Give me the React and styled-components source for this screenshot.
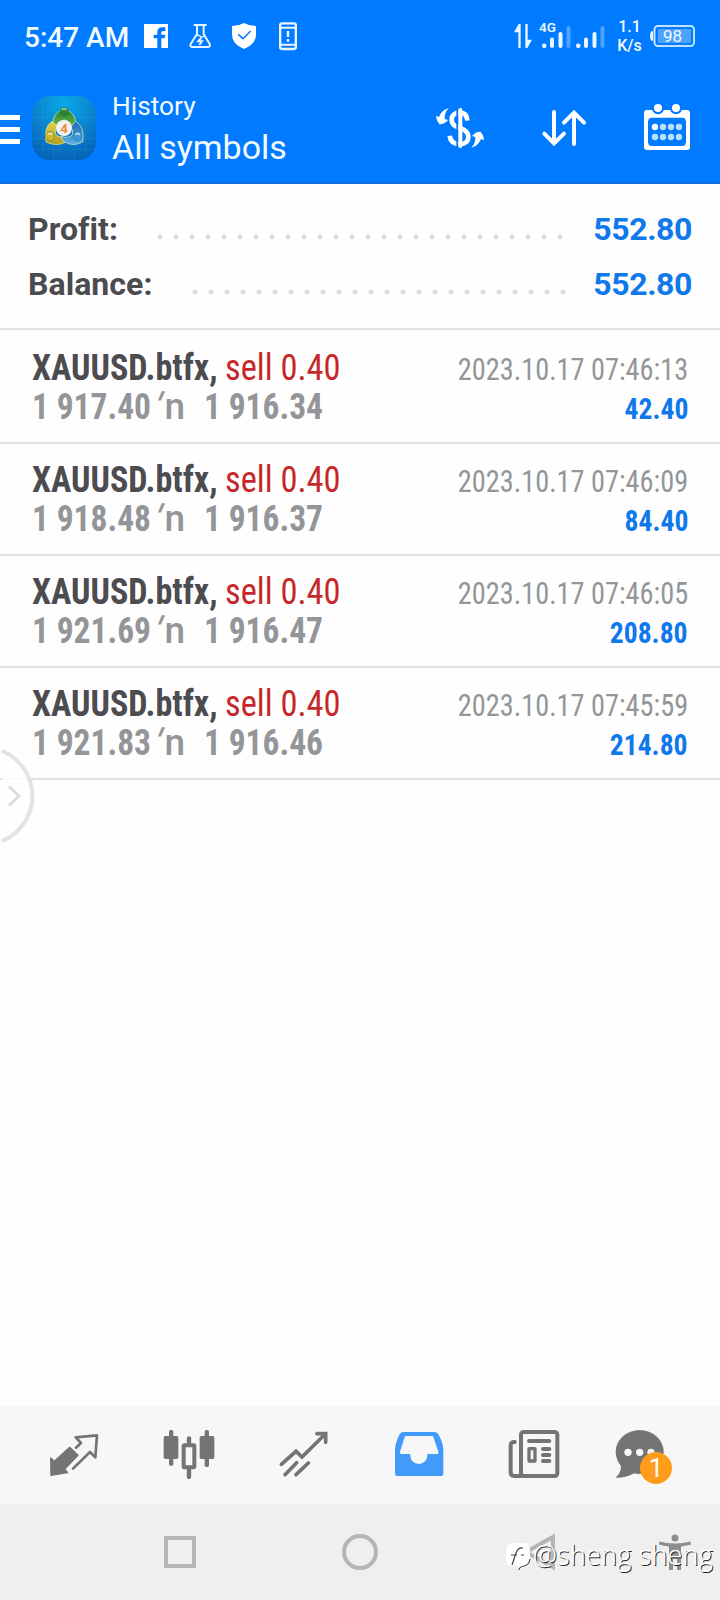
import styled, { createGlobalStyle } from 'styled-components';

const GlobalStyle = createGlobalStyle`
  body {
    margin: 0;
    background: #fefefe;
    font-family: Roboto, 'Noto Sans', sans-serif;
  }
  svg {
    display: block;
    flex: none;
    overflow: visible;
  }
`;

const Screen = styled.div`
  position: relative;
  display: flex;
  flex-direction: column;
  width: 720px;
  height: 1600px;
  overflow: hidden;
`;

/* status bar */

const StatusBar = styled.div`
  display: flex;
  align-items: center;
  justify-content: space-between;
  height: 72px;
  padding: 0 25px 0 24px;
  box-sizing: border-box;
  background: #007aff;
  color: #f4fbff;
`;

const StatusGroup = styled.div`
  display: flex;
  align-items: center;
  gap: ${props => props.$gap}px;
`;

const Clock = styled.span`
  width: 102px;
  margin-top: 3px;
  font-size: 28px;
  font-weight: 500;
  line-height: 32px;
  white-space: nowrap;
`;

const Signals = styled.div`
  display: flex;
  gap: 4px;
  padding-left: 8px;
`;

const Speed = styled.div`
  width: 25px;
  margin: 0 8px 0 13px;
  font-size: 16px;
  font-weight: 500;
  line-height: 19px;
  text-align: center;
`;

/* app header */

const Header = styled.header`
  display: flex;
  align-items: center;
  height: 112px;
  padding-right: 23px;
  box-sizing: border-box;
  border-bottom: 2px solid #0b6fdc;
  background: #007aff;
  color: #f4fbff;
`;

const MenuButton = styled.div`
  display: flex;
  flex-direction: column;
  gap: 7px;
  width: 20px;
  margin: 5px 12px 0 0;
`;

const MenuBar = styled.span`
  height: 5px;
  background: #fff;
`;

const LogoSlot = styled.div`
  padding-top: 2px;
`;

const Titles = styled.div`
  flex: 1;
  align-self: flex-start;
  padding: 18px 0 0 16px;
`;

const Caption = styled.div`
  font-size: 26.3px;
  line-height: 32px;
`;

const Title = styled.div`
  margin-top: 5px;
  font-size: 34px;
  line-height: 40px;
`;

const HeaderActions = styled.div`
  display: flex;
  gap: 43.5px;
  padding-top: 2px;
`;

/* summary */

const Summary = styled.section`
  height: 146px;
  padding: 18px 28px 0;
  box-sizing: border-box;
  border-bottom: 2px solid #e2e2e2;
`;

const SummaryRow = styled.div`
  display: flex;
  height: 55px;
  font-size: 32px;
  font-weight: 700;
  line-height: 54px;
  color: #4b4b50;
`;

const SummaryLabel = styled.span`
  width: ${props => props.$width}px;
  letter-spacing: 0.05px;
`;

const Leader = styled.span`
  width: ${props => props.$count * 16}px;
  height: 16px;
  margin-top: 26.5px;
  background: radial-gradient(circle at 8px 8px, #e0e0e0 2.2px, transparent 2.9px) 0 0 / 16px 16px;
`;

const SummaryValue = styled.span`
  margin-left: auto;
  letter-spacing: -0.4px;
  color: #0f78ea;
`;

/* deals */

const Deals = styled.main`
  flex: 1;
  padding-top: 2px;
`;

const Deal = styled.div`
  height: 112px;
  padding: 16px 32px 0;
  box-sizing: border-box;
  border-bottom: 2px solid #e2e2e2;
  font-family: 'Roboto Condensed', Roboto, sans-serif;
`;

const DealLine = styled.div`
  display: flex;
  align-items: baseline;
  height: 39px;
  line-height: 39px;
  white-space: pre;
`;

const Symbol = styled.span`
  width: 193px;
  font-size: 37px;
  font-weight: 700;
  color: #4b4b50;
  transform: scaleX(0.92);
  transform-origin: 0 0;
`;

const Side = styled.span`
  font-size: 37px;
  color: #c62828;
  transform: scaleX(0.93);
  transform-origin: 0 0;
`;

const Time = styled.span`
  margin-left: auto;
  font-size: 30.5px;
  color: #949599;
  transform: scaleX(0.928);
  transform-origin: 100% 0;
`;

const Price = styled.span`
  width: ${props => props.$width}px;
  font-size: 37px;
  font-weight: 700;
  color: #949599;
  transform: scaleX(0.905);
  transform-origin: 0 0;
`;

const Arrow = styled.span`
  display: flex;
  width: 50px;
  font-family: Roboto, sans-serif;
  font-size: 37px;
  font-weight: 500;
  color: #949599;
`;

const Tick = styled.span`
  width: 11px;
  transform: skewX(-22deg);
`;

const Profit = styled.span`
  margin-left: auto;
  font-size: 30px;
  font-weight: 700;
  color: #0f78ea;
  transform: scaleX(0.92);
  transform-origin: 100% 0;
`;

/* drawer handle, floats over the list */

const Handle = styled.div`
  position: absolute;
  top: 745px;
  left: 0;
`;

/* bottom bars */

const TabBar = styled.nav`
  display: flex;
  align-items: center;
  height: 98px;
  padding: 0 15px;
  background: #f7f7f7;
`;

const Tab = styled.div`
  position: relative;
  display: flex;
  flex: 1;
  justify-content: center;
`;

const Badge = styled.span`
  position: absolute;
  top: 27px;
  left: 50px;
  width: 32px;
  height: 32px;
  border-radius: 50%;
  background: #ff9c1a;
  color: #fff;
  font-size: 26px;
  line-height: 33px;
  text-align: center;
`;

const SystemBar = styled.div`
  display: flex;
  align-items: center;
  height: 96px;
  padding-left: 160px;
  background: #efefef;
`;

const SystemKey = styled.div`
  width: 40px;
  margin-right: ${props => props.$gap}px;
`;

const Watermark = styled.div`
  position: absolute;
  top: 1535px;
  left: 506px;
  display: flex;
  align-items: center;
  gap: 3px;
  color: #fff;
  font-family: 'Open Sans', sans-serif;
  font-size: 27px;
  font-weight: 300;
  line-height: 40px;
  letter-spacing: 0.2px;
  white-space: nowrap;
  text-shadow: 1px 1px 0 #222, 0 0 1px #fff;
`;

const FacebookIcon = () => (
  <svg width="28" height="28" viewBox="0 0 84 84">
    <path fill="#fff" d="M6 6H78V78H58V49H68L70 38H58V32Q58 27 63 27H70V16H60Q46 16 46 30V38H35V49H46V78H6Z" />
  </svg>
);

const FlaskIcon = () => (
  <svg width="28" height="28" viewBox="0 0 84 84" fill="none" stroke="#e6f5ff" strokeWidth="6">
    <path d="M23 9H62M33 9V36L14 66Q11 75 20 75H65Q74 75 71 66L53 36V9" strokeLinejoin="round" />
    <path d="M28 43Q36 37 42 42T57 42" strokeWidth="4" />
    <path d="M46 47L37 58H48L40 69" strokeWidth="6" />
  </svg>
);

const ShieldIcon = () => (
  <svg width="28" height="28" viewBox="0 0 84 84">
    <path fill="#fff" d="M42 3Q58 12 78 12V38Q78 66 42 81Q6 66 6 38V12Q26 12 42 3Z" />
    <path d="M25 37L39 50L62 27" fill="none" stroke="#007aff" strokeWidth="4.5" />
  </svg>
);

const PhoneAlertIcon = () => (
  <svg width="28" height="28" viewBox="0 0 84 84" fill="none" stroke="#eaf6ff" strokeWidth="7">
    <rect x="18.500" y="4" width="47" height="77" rx="6" />
    <path d="M20 17H64M20 68H64" strokeWidth="6" />
    <path d="M42 27V45M42 51V59" strokeWidth="7.500" />
  </svg>
);

const DataArrowsIcon = () => (
  <svg width="18" height="24" viewBox="0 0 54 72" fill="#eaf6ff">
    <path d="M14 0H20V72H13V25H0Z" />
    <path d="M34 0H41V47H54L40 72H34Z" />
  </svg>
);

const SignalIcon = ({ label }) => (
  <svg width="30" height="28" viewBox="0 0 30 28" fill="#eaf6ff">
    {label && <text x="-1" y="9.500" fontFamily="Roboto" fontSize="13.500" fontWeight="600">{label}</text>}
    <rect x="2" y="21.500" width="4.500" height="4.500" rx="2" />
    <rect x="10" y="15.500" width="4" height="10.500" rx="2" />
    <rect x="18.500" y="10" width="4" height="16" rx="2" />
    <rect x="26.500" y="4" width="4" height="22" rx="2" fill="#4da3ff" />
  </svg>
);

const BatteryIcon = () => (
  <svg width="45" height="24" viewBox="0 0 45 24">
    <path d="M3 7Q0 7 0 12T3 17Z" fill="#eaf6ff" />
    <rect x="4.500" y="2" width="39.500" height="20" rx="3.500" fill="none" stroke="#bfe3ff" strokeWidth="2" />
    <rect x="8" y="5" width="33" height="14" fill="#4da1ff" />
    <text x="22.500" y="18" fill="#f4fbff" fontFamily="Roboto" fontSize="17" textAnchor="middle">98</text>
  </svg>
);

const AppLogo = () => (
  <svg width="64" height="64" viewBox="0 0 192 192">
    <defs>
      <radialGradient id="logoBg" cx="50%" cy="10%" r="95%">
        <stop offset="0" stopColor="#08a9ea" />
        <stop offset="0.550" stopColor="#0b80cc" />
        <stop offset="1" stopColor="#0560b6" />
      </radialGradient>
      <linearGradient id="logoGreen" x2="0" y2="1">
        <stop offset="0" stopColor="#23802c" />
        <stop offset="1" stopColor="#6dbb4a" />
      </linearGradient>
      <linearGradient id="logoYellow" x2="0" y2="1">
        <stop offset="0" stopColor="#e2d24a" />
        <stop offset="1" stopColor="#b3a01c" />
      </linearGradient>
      <linearGradient id="logoBlue" x2="0" y2="1">
        <stop offset="0" stopColor="#1c66ad" />
        <stop offset="1" stopColor="#58b2ea" />
      </linearGradient>
    </defs>
    <rect width="192" height="192" rx="54" fill="url(#logoBg)" />
    <path d="M32 8V184M64 0V192M128 0V192M160 8V184M0 64H192M0 128H192M0 160H192" stroke="#5fc0ee" strokeOpacity="0.200" strokeWidth="2" />
    <g stroke="#dfeec0" strokeWidth="2">
      <path d="M97 42Q128 44 133 86L116 94Q112 72 97 72T78 94L61 86Q66 44 97 42Z" fill="url(#logoGreen)" />
      <path d="M60 76Q34 94 42 138Q72 152 98 140L92 122Q76 124 70 112Q68 98 78 92Z" fill="url(#logoYellow)" />
      <path d="M130 76Q160 92 152 138Q122 154 94 136L88 122Q116 128 122 114Q124 100 116 94Z" fill="url(#logoBlue)" />
    </g>
    <g stroke="#1d5a3a" strokeOpacity="0.500" strokeWidth="2">
      <circle cx="97" cy="47" r="13" fill="#2a8431" />
      <circle cx="54" cy="121" r="14" fill="#cdb52b" />
      <circle cx="137" cy="121" r="13" fill="#3c98d8" />
    </g>
    <path d="M89 42Q96 34 104 42M47 116Q54 109 61 116M130 116Q137 109 144 116" fill="none" stroke="#fff" strokeOpacity="0.600" strokeWidth="5" />
    <circle cx="96" cy="96" r="24" fill="#f6f1ee" />
    <text x="96" y="110" fill="#ef8c42" fontFamily="Roboto" fontSize="40" fontWeight="700" textAnchor="middle">4</text>
  </svg>
);

const CurrencyIcon = () => (
  <svg width="60" height="56" viewBox="0 0 180 168">
    <path
      d="M112 62C111 46 104 38 90 38C74 38 65 46 65 59C65 74 76 79 90 84C105 89 115 96 115 110C115 125 105 132 90 132C72 132 61 124 59 107"
      fill="none"
      stroke="#fff"
      strokeWidth="14"
    />
    <path d="M82 24V144" stroke="#007aff" strokeWidth="6" />
    <path d="M91 30V138" stroke="#fff" strokeWidth="12" strokeLinecap="round" />
    <path id="turn" d="M56 25Q36 29 27 51L18 48Q19 62 28 73Q42 74 54 60L44 57Q43 38 56 25Z" fill="#fff" />
    <use href="#turn" transform="rotate(180 90 84)" />
  </svg>
);

const SortIcon = () => (
  <svg width="60" height="56" viewBox="0 0 180 168" fill="none" stroke="#fff" strokeWidth="12" strokeLinecap="round">
    <path d="M60 36V130M31 101L60 130L90 101" />
    <path d="M120 132V38M90 68L120 38L150 68" />
  </svg>
);

const CalendarIcon = () => (
  <svg width="60" height="56" viewBox="0 0 180 168">
    <rect x="21" y="30" width="138" height="120" rx="9" fill="#fff" />
    <g fill="#007aff">
      <rect x="33" y="53" width="114" height="85" rx="12" />
      <circle cx="63" cy="25" r="18" />
      <circle cx="117" cy="25" r="18" />
    </g>
    <g fill="#fff">
      <circle cx="63" cy="24" r="12" />
      <circle cx="117" cy="24" r="12" />
    </g>
    {[81, 111].map(y =>
      [54, 78, 102, 126].map(x => (
        <circle key={`${x}-${y}`} cx={x} cy={y} r="9.500" fill={x === 54 && y === 81 ? '#fff' : '#b9e0ff'} />
      ))
    )}
  </svg>
);

const QuotesIcon = () => (
  <svg width="60" height="60" viewBox="0 0 180 180" strokeLinejoin="round" strokeLinecap="round">
    <path d="M23 99L34 109L80 67L105 91L65 132L74 143L24 151Z" fill="#747474" stroke="#747474" strokeWidth="4" />
    <path d="M90 131L141 81L157 97L162 31L98 37L114 54L99 68" fill="none" stroke="#747474" strokeWidth="8" />
  </svg>
);

const CandlesIcon = () => (
  <svg width="60" height="60" viewBox="0 0 180 180" fill="#747474">
    <rect x="17" y="33" width="44" height="69" rx="5" />
    <rect x="33" y="15" width="13" height="107" rx="5" />
    <rect x="125" y="33" width="44" height="69" rx="5" />
    <rect x="140" y="15" width="13" height="111" rx="5" />
    <rect x="77" y="60.500" width="32" height="66" rx="2" fill="none" stroke="#747474" strokeWidth="12" />
    <path d="M93 40V56M93 132V156" stroke="#747474" strokeWidth="13" strokeLinecap="round" />
  </svg>
);

const TrendIcon = () => (
  <svg width="60" height="60" viewBox="0 0 180 180" fill="none" stroke="#747474" strokeWidth="11" strokeLinecap="round">
    <path d="M25 118L69 79L87 96L157 27" />
    <path d="M132 26H158V52" />
    <path d="M36 149L71 113M69 149L106 114" />
  </svg>
);

const InboxIcon = () => (
  <svg width="60" height="60" viewBox="0 0 180 180" fill="#429bfb">
    <path
      fillRule="evenodd"
      d="M46 21H139Q147 21 151 28Q166 54 166 74V147Q166 153 160 153H27Q21 153 21 147V74Q21 54 35 28Q39 21 46 21ZM54 33Q51 33 50 36L36 80Q35 87 40 87H67V92A25.500 25 0 0 0 118 92V87H148Q152 87 151 80L136 36Q135 33 132 33Z"
    />
  </svg>
);

const NewsIcon = () => (
  <svg width="60" height="60" viewBox="0 0 180 180" fill="none" stroke="#747474" strokeWidth="12" strokeLinecap="round">
    <rect x="54" y="21" width="109" height="132" rx="8" />
    <path d="M35 51Q23 50 23 62V142Q23 153 34 153H54" />
    <path d="M78 48H139M120 72H139M120 90H139M120 108H139" />
    <rect x="78" y="71" width="18" height="37" rx="1" strokeWidth="10" />
  </svg>
);

const ChatIcon = () => (
  <svg width="60" height="60" viewBox="0 0 180 180" fill="#747474">
    <ellipse cx="65" cy="81" rx="72" ry="66" />
    <path d="M6 110Q16 138 -7 158Q24 159 50 144Z" />
    <g fill="#f7f7f7">
      <circle cx="30" cy="82" r="11" />
      <circle cx="65" cy="82" r="11" />
      <circle cx="99" cy="82" r="11" />
    </g>
  </svg>
);

const tabs = [QuotesIcon, CandlesIcon, TrendIcon, InboxIcon, NewsIcon, ChatIcon];

const summary = [
  { label: 'Profit:', value: '552.80', labelWidth: 123.5, dots: 26 },
  { label: 'Balance:', value: '552.80', labelWidth: 158.5, dots: 24 },
];

const deals = [
  { open: '1 917.40', close: '1 916.34', time: '2023.10.17 07:46:13', profit: '42.40' },
  { open: '1 918.48', close: '1 916.37', time: '2023.10.17 07:46:09', profit: '84.40' },
  { open: '1 921.69', close: '1 916.47', time: '2023.10.17 07:46:05', profit: '208.80' },
  { open: '1 921.83', close: '1 916.46', time: '2023.10.17 07:45:59', profit: '214.80' },
];

const App = () => (
  <Screen>
    <GlobalStyle />

    <StatusBar>
      <StatusGroup $gap={16}>
        <Clock>5:47 AM</Clock>
        <FacebookIcon />
        <FlaskIcon />
        <ShieldIcon />
        <PhoneAlertIcon />
      </StatusGroup>
      <StatusGroup $gap={0}>
        <DataArrowsIcon />
        <Signals>
          <SignalIcon label="4G" />
          <SignalIcon />
        </Signals>
        <Speed>
          1.1
          <br />
          K/s
        </Speed>
        <BatteryIcon />
      </StatusGroup>
    </StatusBar>

    <Header>
      <MenuButton>
        <MenuBar />
        <MenuBar />
        <MenuBar />
      </MenuButton>
      <LogoSlot>
        <AppLogo />
      </LogoSlot>
      <Titles>
        <Caption>History</Caption>
        <Title>All symbols</Title>
      </Titles>
      <HeaderActions>
        <CurrencyIcon />
        <SortIcon />
        <CalendarIcon />
      </HeaderActions>
    </Header>

    <Summary>
      {summary.map(row => (
        <SummaryRow key={row.label}>
          <SummaryLabel $width={row.labelWidth}>{row.label}</SummaryLabel>
          <Leader $count={row.dots} />
          <SummaryValue>{row.value}</SummaryValue>
        </SummaryRow>
      ))}
    </Summary>

    <Deals>
      {deals.map(deal => (
        <Deal key={deal.time}>
          <DealLine>
            <Symbol>XAUUSD.btfx,</Symbol>
            <Side>sell 0.40</Side>
            <Time>{deal.time}</Time>
          </DealLine>
          <DealLine>
            <Price $width={121.5}>{deal.open}</Price>
            <Arrow>
              <Tick>′</Tick>n
            </Arrow>
            <Price $width={120}>{deal.close}</Price>
            <Profit>{deal.profit}</Profit>
          </DealLine>
        </Deal>
      ))}
    </Deals>

    <Handle>
      <svg width="36" height="102" viewBox="0 0 36 102" fill="none">
        <path d="M2 4.500A50 50 0 0 1 2 97.500Z" fill="#fefefe" fillOpacity="0.850" />
        <path d="M2 6A48.500 48.500 0 0 1 2 96" stroke="#e3e3e3" strokeWidth="4" />
        <path d="M9 41.500L19 51L9 60.500" stroke="#dcdcdc" strokeWidth="3" />
      </svg>
    </Handle>

    <TabBar>
      {tabs.map((Icon, index) => (
        <Tab key={index}>
          <Icon />
          {Icon === ChatIcon && <Badge>1</Badge>}
        </Tab>
      ))}
    </TabBar>

    <SystemBar>
      <SystemKey $gap={140}>
        <svg width="40" height="40" viewBox="0 0 40 40" fill="none" stroke="#b5b5b5" strokeWidth="4">
          <rect x="6" y="6" width="28" height="28" />
        </svg>
      </SystemKey>
      <SystemKey $gap={140}>
        <svg width="40" height="40" viewBox="0 0 40 40" fill="none" stroke="#b5b5b5" strokeWidth="4">
          <circle cx="20" cy="20" r="16" />
        </svg>
      </SystemKey>
      <SystemKey $gap={95}>
        <svg width="40" height="40" viewBox="0 0 40 40" fill="none" stroke="#b5b5b5" strokeWidth="4">
          <path d="M33 5V35L6 20Z" />
        </svg>
      </SystemKey>
      <SystemKey $gap={0}>
        <svg width="40" height="40" viewBox="0 0 40 40" fill="#8d8d8d">
          <circle cx="20" cy="6" r="3.500" />
          <path d="M4.500 9.500Q20 13.500 35.500 9.500L36 12.500Q30 14 26 14.500V38H22V27H18V38H14V14.500Q9 14 4 12.500Z" />
        </svg>
      </SystemKey>
    </SystemBar>

    <Watermark>
      <svg width="24" height="30" viewBox="0 0 24 30" fill="none">
        <path d="M7 3H17Q24 3 24 10V18Q24 25 18 26L12 30V26H7Q0 26 0 19V10Q0 3 7 3Z" fill="#fff" />
        <path d="M17 8Q12 7 10 13L6 25M5 15H11M15 15H18M13 30Q13 27 18 26Q23 25 24 19" stroke="#444" strokeWidth="1.200" />
      </svg>
      <span>@sheng sheng</span>
    </Watermark>
  </Screen>
);

export default App;
